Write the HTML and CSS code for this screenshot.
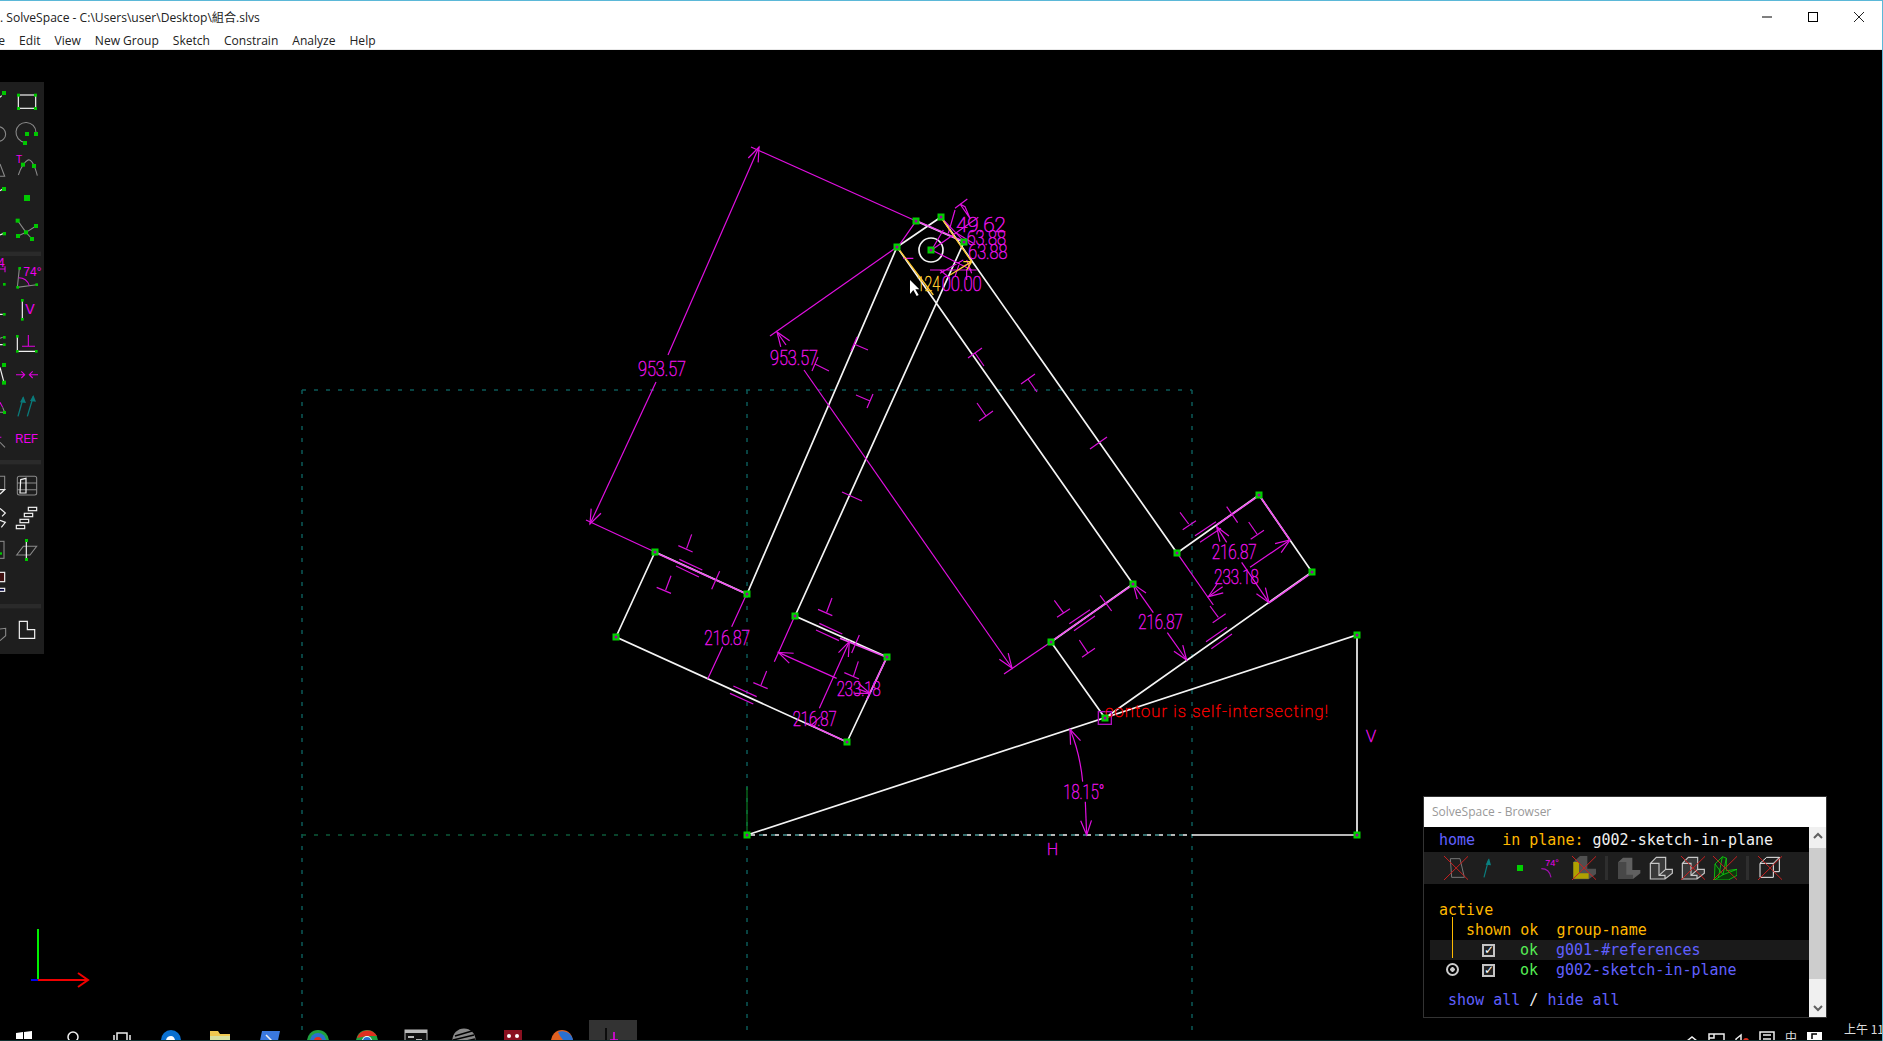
FILE: index.html
```html
<!DOCTYPE html>
<html lang="zh-Hant">
<head>
<meta charset="utf-8">
<title>SolveSpace</title>
<link rel="stylesheet" href="styles.css">
</head>
<body>
<div class="app">
  <header class="titlebar">
    <span class="title">. SolveSpace - C:\Users\user\Desktop\組合.slvs</span>
    <div class="winctl">
      <svg width="12" height="12" viewBox="0 0 12 12"><path d="M1 6H11" class="ctl"/></svg>
      <svg width="12" height="12" viewBox="0 0 12 12"><rect x="1.5" y="1.5" width="9" height="9" class="ctl"/></svg>
      <svg width="12" height="12" viewBox="0 0 12 12"><path d="M1 1L11 11M11 1L1 11" class="ctlx"/></svg>
    </div>
  </header>
  <nav class="menubar">
    <span class="m-file">File</span><span>Edit</span><span>View</span><span>New Group</span><span>Sketch</span><span>Constrain</span><span>Analyze</span><span>Help</span>
  </nav>
  <main class="canvas">
    <svg class="drawing" viewBox="0 50 1883 991" width="1883" height="991">
      <defs>
        <marker id="arr" orient="auto-start-reverse" markerWidth="14" markerHeight="12" refX="12" refY="5" viewBox="0 0 14 10"><path d="M0,0.5 L12,5 L0,9.5" class="arrowhead"/></marker>
        <g id="pt"><rect x="-3.5" y="-3.5" width="7" height="7" class="ptbox"/><circle r="1.5" class="ptdot"/></g>
      </defs>

      <g class="constr">
        <path d="M302 390H1192M302 390V1030M1192 390V1030M747 390V1030"/>
        <path d="M302 835H747" class="constr-g"/>
      </g>
      <path d="M747 835V787" class="axis-g"/>

      <g class="sketch">
        <path d="M655 552L747 594L897 247M655 552L616 637L847 742L887 657L795 616L964 242M1133 584L1051 642L1105 718M1133 584L897 247L941 217L1177 553L1259 495L1312 572L1105 718M916 221L964 242M747 835L1357 635V835"/>
        <path d="M747 835H1192" class="dashed"/>
        <path d="M1192 835H1357"/>
        <circle cx="931" cy="250" r="12"/>
      </g>
      <path d="M747 835H1192" class="constr-over"/>

      <g class="dim">
        <path d="M916 221L751 147M655 552L586 520"/>
        <path d="M668 355L759 147" marker-end="url(#arr)"/>
        <path d="M656 382L590 524" marker-end="url(#arr)"/>
        <path d="M897 247L770 336"/>
        <path d="M786 345L777 332" marker-end="url(#arr)"/>
        <path d="M804 370L1012 668" marker-end="url(#arr)"/>
        <path d="M1004 674L1051 642"/>
      </g>
      <g class="marks">
        <path d="M857 337L851 351M854 344L868 350"/>
        <path d="M812 371L818 357M815 364L829 371"/>
        <path d="M873 394L867 408M870 401L856 395"/>
        <path d="M842 492L862 501"/>
        <path d="M968 358L982 348M975 353L984 366"/>
        <path d="M1021 384L1035 374M1028 379L1037 392"/>
        <path d="M979 421L993 411M986 416L977 403"/>
        <path d="M1090 449L1107 437"/>
      </g>

      <text x="638" y="376" class="dimtxt" textLength="48" lengthAdjust="spacingAndGlyphs">953.57</text>
      <text x="770" y="365" class="dimtxt" textLength="48" lengthAdjust="spacingAndGlyphs">953.57</text>

      <!-- detail drawn on a 3x grid, tile at 580,530 -->
      <g transform="translate(580 530) scale(.33333)" class="z">
        <path class="over" d="M224 67L500 192M780 325L920 382M680 580L802 637M920 382L860 510"/>
        <g class="dim">
          <path d="M500 192L455 290M428 350L383 447M644 259L583 395"/>
          <path d="M770 445L595 367" marker-end="url(#arr)"/>
          <path d="M718 535L808 335" marker-end="url(#arr)"/>
          <path d="M838 478L870 490" marker-end="url(#arr)"/>
          <path d="M695 585L722 560"/>
        </g>
        <g class="marks">
          <path d="M335 13L320 55M295 47L338 66M298 88L367 120M288 108L357 141M273 137L257 180M230 172L273 190M419 124L395 178"/>
          <path d="M460 468L530 500M450 490L520 522M560 423L543 465M520 458L563 476"/>
          <path d="M756 204L740 247M714 238L757 257M718 280L787 312M708 300L777 332M838 315L815 369M835 394L820 440M793 428L837 447"/>
        </g>
        <text x="373" y="344" class="dimtxt big" textLength="137" lengthAdjust="spacingAndGlyphs">216.87</text>
        <text x="770" y="499" class="dimtxt big" textLength="132" lengthAdjust="spacingAndGlyphs">233.18</text>
        <text x="638" y="587" class="dimtxt big" textLength="132" lengthAdjust="spacingAndGlyphs">216.87</text>
      </g>

      <!-- tile at 1000,480 -->
      <g transform="translate(1000 480) scale(.33333)" class="z">
        <path class="over" d="M153 485L400 313M650 135L778 46L870 180M937 277L808 368"/>
        <g class="dim">
          <path d="M532 220L640 375"/>
          <path d="M460 398L400 313" marker-end="url(#arr)"/>
          <path d="M502 458L560 540" marker-end="url(#arr)"/>
          <path d="M680 187L650 140" marker-end="url(#arr)"/>
          <path d="M725 247L807 368" marker-end="url(#arr)"/>
          <path d="M750 262L870 180" marker-end="url(#arr)"/>
          <path d="M668 320L625 350" marker-end="url(#arr)"/>
        </g>
        <g class="marks">
          <path d="M540 97L566 132M548 149L588 122M585 167L648 125M600 187L663 145M680 80L713 128M746 126L771 162M752 178L792 151"/>
          <path d="M630 378L655 412M638 428L677 401M618 485L681 442M634 506L696 462"/>
          <path d="M300 346L335 393M208 431L270 389M222 452L285 408M163 361L190 398M171 412L210 386M238 480L263 518M246 532L285 505"/>
        </g>
        <text x="635" y="237" class="dimtxt big" textLength="135" lengthAdjust="spacingAndGlyphs">216.87</text>
        <text x="643" y="311" class="dimtxt big" textLength="133" lengthAdjust="spacingAndGlyphs">233.18</text>
        <text x="415" y="446" class="dimtxt big" textLength="133" lengthAdjust="spacingAndGlyphs">216.87</text>
      </g>

      <!-- tile at 860,190 -->
      <g transform="translate(860 190) scale(.33333)" class="z">
        <path class="over" d="M169 92L313 155"/>
        <g class="dim">
          <path d="M169 92L113 172M243 82L313 155M322 27L285 55M300 42L330 85L315 50L300 42"/>
          <path d="M355 82L215 180L335 240M130 205L160 205M215 180L250 120M210 240L350 240M240 250L310 210M240 240L270 265M300 215L285 260M320 210L335 250M320 240L320 270M285 60L265 130M290 130L340 160"/>
        </g>
        <path class="yel" d="M112 172L220 315M243 82L335 215M270 255L335 215M310 215L335 215M320 240L335 215"/>
        <text x="288" y="126" class="dimtxt big" textLength="150" lengthAdjust="spacingAndGlyphs">49.62</text>
        <text x="320" y="166" class="dimtxt big" textLength="118" lengthAdjust="spacingAndGlyphs">63.88</text>
        <text x="325" y="206" class="dimtxt big" textLength="117" lengthAdjust="spacingAndGlyphs">63.88</text>
        <text x="170" y="304" class="dimtxt big yeltxt" textLength="70" lengthAdjust="spacingAndGlyphs">124</text>
        <text x="245" y="304" class="dimtxt big" textLength="120" lengthAdjust="spacingAndGlyphs">00.00</text>
        <polygon class="cursor" points="150,270 150,312 160,300 170,318 176,315 166,298 178,298"/>
      </g>

      <!-- tile at 1050,670 -->
      <g transform="translate(1050 670) scale(.33333)" class="z">
        <g class="dim">
          <path d="M98 335Q90 250 60 178" marker-end="url(#arr)"/>
          <path d="M106 395L110 495" marker-end="url(#arr)"/>
        </g>
        <text x="40" y="387" class="dimtxt big" textLength="123" lengthAdjust="spacingAndGlyphs">18.15°</text>
        <rect x="145" y="125" width="39" height="38" class="hover"/>
      </g>

      <text x="1105" y="717" class="errtxt" textLength="223">contour is self-intersecting!</text>
      <text x="1047" y="855" class="dimtxt sm" textLength="11" lengthAdjust="spacingAndGlyphs">H</text>
      <text x="1366" y="742" class="dimtxt sm" textLength="10" lengthAdjust="spacingAndGlyphs">V</text>

      <use href="#pt" x="655" y="552"/><use href="#pt" x="747" y="594"/><use href="#pt" x="616" y="637"/><use href="#pt" x="847" y="742"/>
      <use href="#pt" x="795" y="616"/><use href="#pt" x="887" y="657"/><use href="#pt" x="1133" y="584"/><use href="#pt" x="1051" y="642"/>
      <use href="#pt" x="1177" y="553"/><use href="#pt" x="1259" y="495"/><use href="#pt" x="1312" y="572"/><use href="#pt" x="1105" y="718"/>
      <use href="#pt" x="916" y="221"/><use href="#pt" x="941" y="217"/><use href="#pt" x="897" y="247"/><use href="#pt" x="964" y="242"/>
      <use href="#pt" x="931" y="250"/><use href="#pt" x="1357" y="635"/><use href="#pt" x="1357" y="835"/><use href="#pt" x="747" y="835"/>

      <path d="M38 980V929" class="axis-y"/>
      <path d="M38 980H88M78 973L88 980L78 987" class="axis-x"/>
      <path d="M31 980H38" class="axis-z"/>
    </svg>

    <aside class="toolbar">
      <svg width="44" height="572" viewBox="0 0 132 1716">
        <g transform="translate(0 -9)">
          <path class="wht" d="M0 55L5 50"/>
          <rect class="wht" x="55" y="48" width="52" height="40"/>
          <path class="gry" d="M-5 143a22 22 0 1 1 0 44a22 22 0 1 1 0-44"/>
          <path class="gry" d="M74 190A30 30 0 1 1 108 160"/>
          <path class="gry" d="M0 255L14 292H0"/>
          <path class="gry" d="M55 288Q68 250 85 242Q100 242 112 290"/>
          <path class="wht" d="M0 335L8 330M0 468L10 464"/>
          <path class="gry" d="M53 425L78 460L96 480M54 471L78 460L108 441"/>
          <rect class="sep" x="0" y="518" width="123" height="13"/>
          <text x="48" y="252" class="tmag t-s">T</text>
          <text x="-6" y="565" class="tmag t-m">4</text>
          <path class="mag" d="M0 570H15M15 562V580"/>
          <path class="gry" d="M58 568L52 625L110 617"/>
          <path class="mag" d="M56 596Q80 596 88 620"/>
          <text x="70" y="592" class="tmag t-m">74°</text>
          <path class="wht" d="M0 706H8M67 665V720"/>
          <text x="76" y="706" class="tmag t-l">V</text>
          <path class="gry" d="M0 778L8 775"/>
          <path class="wht" d="M0 797H8M52 772V817H110"/>
          <path class="mag" d="M85 768V802M66 802H105"/>
          <g class="grn">
            <rect x="6" y="36" width="12" height="12"/>
            <rect x="51" y="44" width="9" height="9"/><rect x="102" y="44" width="9" height="9"/><rect x="51" y="84" width="9" height="9"/><rect x="102" y="84" width="9" height="9"/>
            <rect x="75" y="159" width="12" height="12"/><rect x="102" y="159" width="12" height="12"/><rect x="69" y="186" width="12" height="12"/>
            <rect x="63" y="251" width="12" height="12"/><rect x="96" y="255" width="12" height="12"/>
            <rect x="6" y="324" width="12" height="12"/><rect x="72" y="348" width="18" height="18"/>
            <rect x="8" y="459" width="10" height="10"/>
            <rect x="47" y="419" width="12" height="12"/><rect x="102" y="435" width="12" height="12"/><rect x="48" y="465" width="12" height="12"/><rect x="90" y="474" width="12" height="12"/><rect x="72" y="454" width="12" height="12"/>
            <rect x="9" y="612" width="8" height="8"/><rect x="55" y="564" width="8" height="8"/><rect x="49" y="621" width="8" height="8"/><rect x="106" y="613" width="8" height="8"/>
            <rect x="9" y="702" width="8" height="8"/><rect x="63" y="660" width="8" height="8"/><rect x="63" y="717" width="8" height="8"/>
            <rect x="9" y="771" width="8" height="8"/><rect x="9" y="793" width="8" height="8"/><rect x="48" y="768" width="8" height="8"/><rect x="48" y="813" width="8" height="8"/><rect x="105" y="813" width="8" height="8"/>
          </g>
        </g>
        <g transform="translate(0 831)">
          <path class="wht" d="M0 25L12 70"/>
          <path class="mag" d="M48 47H74M64 37L74 47L64 57M114 47H88M98 37L88 47L98 57"/>
          <path class="mag" d="M0 130L8 145"/>
          <path class="gry" d="M0 160H14L8 145"/>
          <path class="tea" d="M54 172L70 115M82 172L100 112"/>
          <path class="teaf" d="M70 112L60 130L78 132ZM100 108L90 126L108 128Z"/>
          <path class="mag" d="M0 235H4"/>
          <path class="gry" d="M0 250L15 265"/>
          <text x="46" y="252" class="tmag t-ref" textLength="68" lengthAdjust="spacingAndGlyphs">REF</text>
          <rect class="sep" x="0" y="303" width="123" height="13"/>
          <path class="gry" d="M0 352H14V392L0 405"/>
          <path class="wht" d="M0 392H14L0 405"/>
          <path class="gry" d="M58 352H104Q110 352 110 358V402Q110 408 104 408H58Q52 408 52 402V358Q52 352 58 352ZM52 372H110M52 392H110"/>
          <path class="wht" d="M62 362L78 358V402H60Z"/>
          <path class="wht" d="M0 448L16 462L6 472M0 484L16 490L4 505"/>
          <rect class="wht" x="85" y="445" width="25" height="10"/><rect class="wht" x="73" y="463" width="25" height="10"/><rect class="wht" x="60" y="481" width="26" height="10"/><rect class="wht" x="49" y="499" width="25" height="10"/>
          <rect class="gry" x="-4" y="547" width="16" height="51"/>
          <path class="gry" d="M50 588L70 562H110L90 588Z"/>
          <path class="wht" d="M79 545V601"/>
          <rect class="dred" x="-4" y="640" width="18" height="28"/>
          <rect class="wblue" x="-4" y="688" width="18" height="9"/>
          <rect class="sep" x="0" y="735" width="123" height="13"/>
          <path class="gry" d="M0 810L17 808V830L0 845"/>
          <path class="wht" d="M58 787H82V812H104V838H58Z"/>
          <g class="grn">
            <rect x="6" y="12" width="12" height="12"/><rect x="6" y="65" width="12" height="12"/>
            <rect x="9" y="156" width="9" height="9"/>
            <rect x="0" y="580" width="6" height="7"/>
            <rect x="75" y="540" width="9" height="9"/><rect x="75" y="597" width="9" height="9"/>
          </g>
        </g>
      </svg>
    </aside>

    <section class="browser">
      <div class="br-title">SolveSpace - Browser</div>
      <div class="br-body">
        <div class="br-pane">
          <div class="line"><span class="blue">home</span>   <span class="amber">in plane:</span> <span class="white">g002-sketch-in-plane</span></div>
          <div class="iconbar">
            <svg class="ico" viewBox="-36 -36 72 72"><path class="i-gry" d="M-17 -28L12 -28L25 28L-13 28Z"/><path class="i-x" d="M-36 -36L37 36M37 -36L-36 36"/></svg>
            <svg class="ico" viewBox="-36 -36 72 72"><path class="i-teal" d="M-12 28L2 -26"/><path class="i-tealf" d="M3 -29L-7 -10L9 -8Z"/></svg>
            <svg class="ico" viewBox="-36 -36 72 72"><rect x="-9" y="-9" width="18" height="18" class="i-grn"/></svg>
            <svg class="ico" viewBox="-36 -36 72 72"><text x="-20" y="-6" class="i-txt">74°</text><path class="i-arc" d="M-32 2Q-8 2 -3 28"/></svg>
            <svg class="ico" viewBox="-36 -36 72 72"><path class="i-l" d="M-32 -18L-12 -36H10V2L36 2V18L14 34H-32Z"/><path class="i-y" d="M-32 -18H-15V16H14V32H-32Z"/><path class="i-x" d="M-36 -36L37 36M37 -36L-36 36"/></svg>
            <i class="ico-sep"></i>
            <svg class="ico" viewBox="-36 -36 72 72"><path class="i-d" d="M-32 -18L-18 -31H10V6H34V16L12 33H-32Z"/><path class="i-d2" d="M-32 -18H-8V20H12V33H-32Z"/></svg>
            <svg class="ico" viewBox="-36 -36 72 72"><path class="i-o" d="M-32 -14L-14 -32H14V4L34 4V16L12 33H-32ZM-32 -14H-6V22H12V33M-6 22L14 4"/></svg>
            <svg class="ico" viewBox="-36 -36 72 72"><path class="i-o" d="M-32 -14L-14 -32H14V4L34 4V16L12 33H-32ZM-32 -14H-6V22H12V33M-6 22L14 4"/><path class="i-x" d="M-36 -36L37 36M37 -36L-36 36"/></svg>
            <svg class="ico" viewBox="-36 -36 72 72"><path class="i-m" d="M-30 -12L-8 -34L4 -30V8L36 4V22L10 36H-32ZM-30 -12L-6 20L4 -30M-32 36L-6 20L36 4M-8 -34L-20 30"/><path class="i-x" d="M-36 -36L37 36M37 -36L-36 36"/></svg>
            <i class="ico-sep"></i>
            <svg class="ico" viewBox="-36 -36 72 72"><path class="i-w" d="M-30 -14H10V28H-30ZM-10 -32H28V11H10M-10 -32L-30 -14M28 -32L10 -14"/><path class="i-x" d="M-36 -36L37 36M37 -36L-36 36"/></svg>
          </div>
          <div class="line act"><span class="amber">active</span></div>
          <div class="line"><span class="amber">   shown ok  group-name</span></div>
          <div class="row hi">
            <span class="c-act"><i class="trunk"></i></span>
            <span class="c-chk"><i class="chk">✓</i></span>
            <span class="c-ok">ok</span>
            <span class="blue">g001-#references</span>
          </div>
          <div class="row">
            <span class="c-act"><i class="radio"></i></span>
            <span class="c-chk"><i class="chk">✓</i></span>
            <span class="c-ok">ok</span>
            <span class="blue">g002-sketch-in-plane</span>
          </div>
          <div class="line foot"> <span class="blue">show all</span> <span class="white">/</span> <span class="blue">hide all</span></div>
        </div>
        <div class="scroll">
          <svg class="chev" viewBox="0 0 10 8"><path d="M1 6L5 2L9 6"/></svg>
          <div class="thumb"></div>
          <svg class="chev" viewBox="0 0 10 8"><path d="M1 2L5 6L9 2"/></svg>
        </div>
      </div>
    </section>

    <footer class="taskbar">
      <div class="tb-apps">
        <svg class="tb" viewBox="0 0 24 24"><path class="f-w" d="M4 5L11 4V11H4ZM12 4L20 3V11H12ZM4 12H11V19L4 18ZM12 12H20V20L12 19Z"/></svg>
        <svg class="tb" viewBox="0 0 24 24"><circle cx="12" cy="9" r="5" class="s-w"/><path class="s-w" d="M9 14L5 20"/></svg>
        <svg class="tb" viewBox="0 0 24 24"><path class="s-w" d="M7 5H17V20H7ZM4 7V18M20 7V18"/></svg>
        <svg class="tb" viewBox="0 0 24 24"><circle cx="12" cy="12" r="10" class="f-edge"/><path class="f-k" d="M7 12H16Q15 8 12 8Q8 8 7 12Z"/></svg>
        <svg class="tb" viewBox="0 0 24 24"><path class="f-fold" d="M2 3H10L12 6H22V22H2Z"/><rect x="2" y="8" width="20" height="12" class="f-fold2"/></svg>
        <svg class="tb" viewBox="0 0 24 24"><path class="f-ps" d="M5 3H23L19 22H1Z"/><path class="s-w" d="M9 7L14 12L9 17"/></svg>
        <svg class="tb" viewBox="0 0 24 24"><circle cx="12" cy="13" r="11" class="f-gr"/><circle cx="12" cy="13" r="8" class="f-bl"/><circle cx="12" cy="13" r="4" class="f-rd"/></svg>
        <svg class="tb" viewBox="0 0 24 24"><circle cx="12" cy="13" r="11" class="f-gr"/><path class="f-rd" d="M2 10A11 11 0 0 1 22 8H12Z"/><circle cx="12" cy="13" r="5" class="f-w"/><circle cx="12" cy="13" r="4" class="f-bl"/></svg>
        <svg class="tb" viewBox="0 0 24 24"><rect x="1" y="2" width="22" height="21" class="f-cmd"/><rect x="1" y="2" width="22" height="3" class="f-lg"/><path class="s-w" d="M4 9H10M12 12H18"/></svg>
        <svg class="tb" viewBox="0 0 24 24"><circle cx="12" cy="12" r="11.5" class="f-sph"/><path class="s-k" d="M3 8L20 3M1 12L22 7M1 16L23 11M3 20L23 15"/></svg>
        <svg class="tb" viewBox="0 0 24 24"><rect x="3" y="2" width="18" height="21" class="f-mr"/><circle cx="8" cy="8" r="2" class="f-w"/><circle cx="16" cy="8" r="2" class="f-w"/></svg>
        <svg class="tb" viewBox="0 0 24 24"><circle cx="12" cy="13" r="11" class="f-or"/><path class="f-bl" d="M8 4A11 11 0 0 1 23 12L16 16L10 8Z"/></svg>
        <div class="tb-active"><svg class="tb-sol" viewBox="0 0 48 21"><path class="s-k" d="M17 8V21"/><path class="s-m" d="M25 12V21M21 20H29"/></svg></div>
      </div>
      <div class="tray">
        <svg class="tr" width="12" height="21" viewBox="0 0 12 21"><path class="s-w" d="M1 21L6 17L11 21"/></svg>
        <svg class="tr" width="17" height="21" viewBox="0 0 17 21"><path class="s-w" d="M1 14V21M4 14H16V21M1 14H6V18H1Z"/></svg>
        <svg class="tr" width="14" height="21" viewBox="0 0 14 21"><path class="s-w" d="M1 21V19L6 15V21"/><circle cx="11" cy="21" r="3" class="f-rd"/></svg>
        <svg class="tr" width="16" height="21" viewBox="0 0 16 21"><path class="s-w" d="M1 21V12H15V21M4 15H12M4 19H12"/></svg>
        <span class="tr-ime">中</span>
        <svg class="tr" width="15" height="21" viewBox="0 0 15 21"><rect x="0" y="12" width="15" height="9" class="f-w"/><path class="s-k" d="M10 14H5V19"/></svg>
        <span class="tr-clock">上午 11</span>
      </div>
    </footer>
  </main>
</div>
</body>
</html>
```

FILE: styles.css
```css
*{box-sizing:border-box}
html,body{margin:0;padding:0;background:#000}
.app{width:1883px;height:1041px;display:flex;flex-direction:column;overflow:hidden;border-top:1px solid #5bb8d8;border-right:1px solid #5bb8d8;font-family:"Open Sans","Noto Sans CJK TC",sans-serif}

.titlebar{height:30px;background:#fff;display:flex;align-items:center;justify-content:space-between;color:#222;font-size:12.1px;padding-top:1px}
.title{margin-left:0;white-space:nowrap}
.winctl{display:flex;gap:34px;margin-right:17px}
.ctl{fill:none;stroke:#000;stroke-width:1}
.ctlx{fill:none;stroke:#222;stroke-width:1}

.menubar{height:19px;background:#fff;border-bottom:1px solid #e8e8e8;display:flex;gap:14px;align-items:center;color:#222;font-size:12.05px;margin-left:-14px;padding-top:1px}

.canvas{position:relative;flex:1;background:#000;overflow:hidden}
.drawing{display:block;position:absolute;left:0;top:0}

.constr path{fill:none;stroke:#0b5a58;stroke-width:1.5;stroke-dasharray:4 8}
.constr .constr-g{stroke:#0c5a3a}
.constr-over{fill:none;stroke:#0b5a58;stroke-width:1.5;stroke-dasharray:4 8}
.axis-g{fill:none;stroke:#0a7a20;stroke-width:1.2}
.sketch{fill:none;stroke:#f4f4f4;stroke-width:1.7}
.sketch .dashed{stroke-dasharray:8 4}

.dim path{fill:none;stroke:#e010e0;stroke-width:1.2}
.z .dim path{stroke-width:3.6}
.marks path{fill:none;stroke:#d810d8;stroke-width:1.2}
.z .marks path{stroke-width:3.6}
.z .over{fill:none;stroke:#f050f0;stroke-width:5}
.arrowhead{fill:none;stroke:#e010e0;stroke-width:1}
marker{overflow:visible}
.yel{fill:none;stroke:#ffc830;stroke-width:4}
.cursor{fill:#fff}
.hover{fill:none;stroke:#b010c0;stroke-width:4}

.dimtxt{font-family:Roboto,"Liberation Sans",sans-serif;font-weight:100;font-size:21px;fill:#e818e8;stroke:#e010e0;stroke-width:.55}
.dimtxt.big{font-size:63px;stroke-width:1.65}
.dimtxt.sm{font-size:17px}
.dimtxt.yeltxt{fill:#ffd040;stroke:#ffc830}
.errtxt{font-family:Roboto,"Liberation Sans",sans-serif;font-weight:100;font-size:16.5px;fill:#f01010;stroke:#f00000;stroke-width:.5}

.ptbox{fill:#00d000}
.ptdot{fill:#a000a0}

.axis-y{fill:none;stroke:#00f000;stroke-width:2}
.axis-x{fill:none;stroke:#f00000;stroke-width:2}
.axis-z{fill:none;stroke:#0000f0;stroke-width:2}

.toolbar{position:absolute;left:0;top:32px;width:44px;height:572px;background:#1e1e1e;line-height:0}
.wht{fill:none;stroke:#f0f0f0;stroke-width:3.6}
.gry{fill:none;stroke:#8a8a8a;stroke-width:3.2}
.mag{fill:none;stroke:#e000e0;stroke-width:3.2}
.tea{fill:none;stroke:#0a7a7a;stroke-width:4}
.teaf{fill:#0a7a7a}
.sep{fill:#2a2a2a}
.grn rect{fill:#00c800}
.dred{fill:#401010;stroke:#f0f0f0;stroke-width:3.6}
.wblue{fill:#000040;stroke:#f0f0f0;stroke-width:3.6}
.tmag{fill:#f000f0;font-family:"Liberation Sans",sans-serif}
.t-s{font-size:30px}
.t-m{font-size:36px}
.t-l{font-size:42px}
.t-ref{font-size:40px}

.browser{position:absolute;left:1423px;top:746px;width:404px;height:222px;border:1px solid #333;background:#000;display:flex;flex-direction:column}
.br-title{height:30px;flex:none;background:#fff;color:#999;font-size:12px;padding:6px 0 0 8px;line-height:18px}
.br-body{flex:1;display:flex;min-height:0}
.br-pane{flex:1;min-width:0;font-family:"DejaVu Sans Mono",monospace;font-size:15px;line-height:20px;color:#fff;padding-top:3px}
.line{height:20px;padding-left:15px;white-space:pre}
.blue{color:#6060ff}
.amber{color:#ffb800}
.white{color:#f0f0f0}
.iconbar{height:32px;margin-top:2px;background:#1e1e1e;display:flex;align-items:center;gap:8px;padding-left:20px}
.ico{width:24px;height:24px;flex:none}
.ico-sep{width:3px;height:24px;background:#2e2e2e;margin:0 1px}
.act{margin-top:16px}
.row{height:20px;display:grid;grid-template-columns:43px 38px 36px 1fr;align-items:center;padding-left:15px}
.hi{background:#1a1a1a;margin-left:6px;padding-left:9px}
.c-act{position:relative;height:20px}
.c-ok{color:#55ee55}
.trunk{position:absolute;left:13px;top:-23px;width:1px;height:41px;background:#ffbb00}
.radio{position:absolute;left:7px;top:3px;width:13px;height:13px;border-radius:50%;border:2px solid #ccc;background:radial-gradient(circle,#ccc 0 2px,#000 2.5px)}
.c-chk{display:flex;align-items:center}
.chk{display:block;width:13px;height:13px;border:2px solid #c4c4c4;background:#222;color:#fff;font:bold 12px/9px "DejaVu Sans",sans-serif;text-align:center;overflow:hidden}
.foot{margin-top:10px}

.i-gry{fill:none;stroke:#777;stroke-width:3}
.i-x{fill:none;stroke:#c82020;stroke-width:3}
.i-teal{fill:none;stroke:#0a8080;stroke-width:3.5}
.i-tealf{fill:#0a8080}
.i-grn{fill:#00d000}
.i-txt{font:27px "Liberation Sans",sans-serif;fill:#f000f0}
.i-arc{fill:none;stroke:#a010b0;stroke-width:3.5}
.i-l{fill:#505050}
.i-y{fill:#b0a000}
.i-d{fill:#606060}
.i-d2{fill:#484848}
.i-o{fill:#3a3a3a;stroke:#c8c8c8;stroke-width:3.5}
.i-m{fill:#0a3a0a;stroke:#10d010;stroke-width:2.5}
.i-w{fill:none;stroke:#f0f0f0;stroke-width:3}

.scroll{width:17px;background:#f0f0f0;flex:none;display:flex;flex-direction:column;align-items:center;justify-content:space-between}
.chev{width:10px;height:8px;margin:5px 0;flex:none}
.chev path{fill:none;stroke:#606060;stroke-width:2}
.thumb{width:17px;flex:1;background:#cdcdcd;margin:3px 0 20px}

.taskbar{position:absolute;left:0;right:0;bottom:0;height:21px;display:flex;justify-content:space-between;border-bottom:1px solid #103030;overflow:hidden}
.tb-apps{display:grid;grid-template-columns:repeat(13,48.9px);justify-items:center;align-items:start}
.tb{width:24px;height:24px;margin-top:8px}
.tb-active{width:48px;height:21px;background:#333;margin-left:4px}
.tb-sol{display:block;width:48px;height:21px}
.f-w{fill:#fff}
.s-w{fill:none;stroke:#f0f0f0;stroke-width:1.5}
.s-k{fill:none;stroke:#000;stroke-width:1.5}
.s-m{fill:none;stroke:#f000f0;stroke-width:1.5}
.f-k{fill:#fff}
.f-edge{fill:#0a70d0}
.f-fold{fill:#f0c850}
.f-fold2{fill:#d8e0a0}
.f-ps{fill:#3a78e0}
.f-gr{fill:#20a040}
.f-bl{fill:#2a70d0}
.f-rd{fill:#e03020}
.f-cmd{fill:#101010;stroke:#bbb}
.f-lg{fill:#bbb}
.f-sph{fill:#888}
.f-mr{fill:#8a1020}
.f-or{fill:#e06020}

.tray{display:flex;align-items:flex-start;gap:10px;width:196px;flex:none;color:#ddd}
.tr{flex:none}
.tr-ime{font:12px "Noto Sans CJK TC",sans-serif;line-height:14px;margin-top:10px}
.tr-clock{font:12px "Noto Sans CJK TC",sans-serif;line-height:14px;margin:2px 0 0 12px;white-space:nowrap}
```
